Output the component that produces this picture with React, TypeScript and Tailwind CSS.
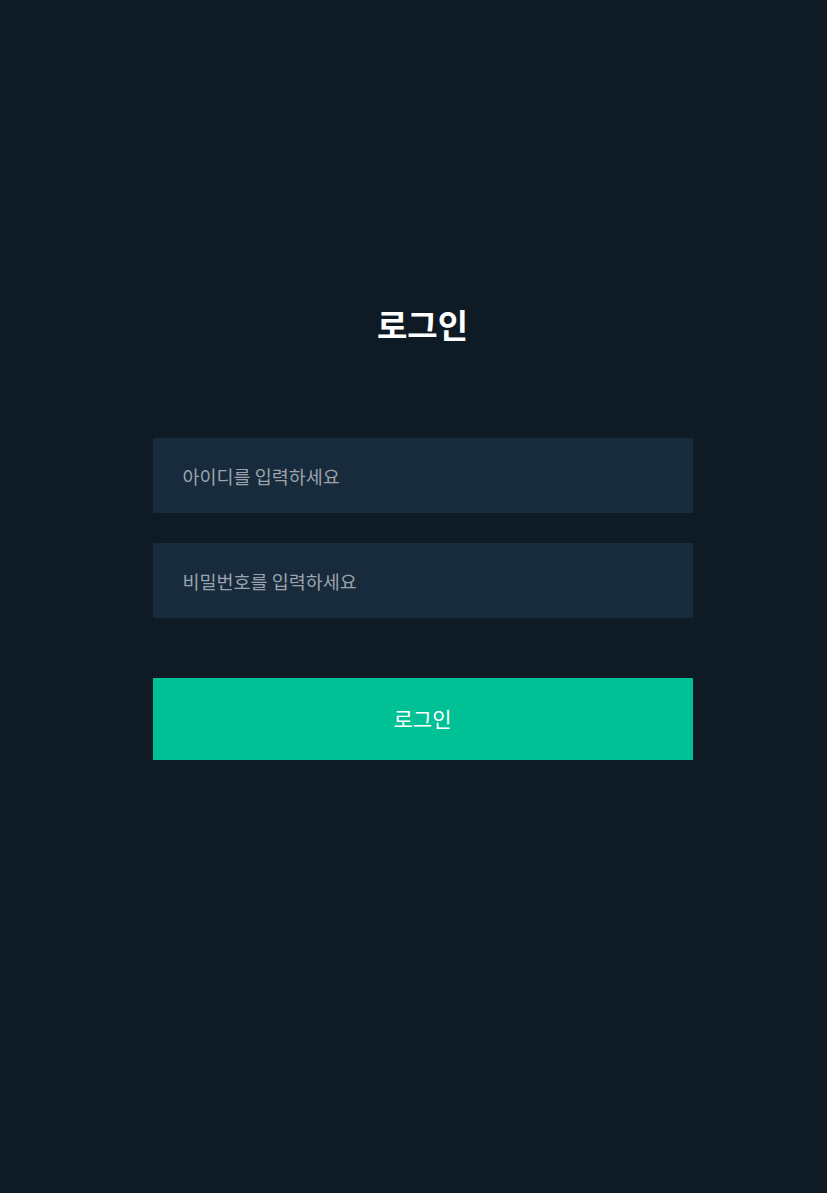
export default function App() {
  return (
    <div
      className="min-h-[1193px] w-full bg-[#0e1b25] flex flex-col items-center pl-[18px]"
      style={{ fontFamily: '"Noto Sans CJK KR", "Noto Sans", sans-serif' }}
    >
      <h1 className="mt-[300px] text-[33px] font-bold leading-[48px] text-white">로그인</h1>
      <form className="mt-[90px] flex w-[540px] flex-col" onSubmit={(e) => e.preventDefault()}>
        <input
          type="text"
          placeholder="아이디를 입력하세요"
          className="h-[75px] w-full bg-[#172b3d] px-[30px] text-[18.5px] text-white placeholder:text-[#9ca3ab] outline-none"
        />
        <input
          type="password"
          placeholder="비밀번호를 입력하세요"
          className="mt-[30px] h-[75px] w-full bg-[#172b3d] px-[30px] text-[18.5px] text-white placeholder:text-[#9ca3ab] outline-none"
        />
        <button
          type="submit"
          className="mt-[60px] h-[82px] w-full bg-[#00c196] text-[21px] text-white"
        >
          로그인
        </button>
      </form>
    </div>
  );
}
